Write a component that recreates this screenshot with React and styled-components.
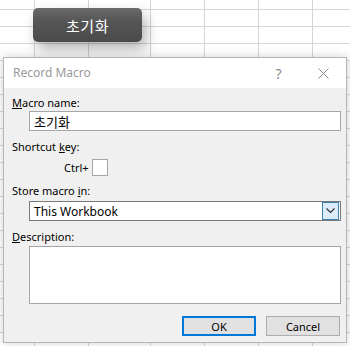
import React from "react";
import styled, { createGlobalStyle } from "styled-components";

const Global = createGlobalStyle`
  html, body { margin: 0; padding: 0; }
  body { font-family: "Noto Sans", "Noto Sans CJK KR", sans-serif; }
`;

const vLines = [34, 88, 150, 204, 258, 312];

const Sheet = styled.div`
  width: 350px;
  height: 346px;
  overflow: hidden;
  background-color: #ffffff;
  background-image:
    ${vLines
      .map(
        (x) =>
          `linear-gradient(to right, transparent ${x}px, #d6d6d6 ${x}px, #d6d6d6 ${x + 1}px, transparent ${x + 1}px)`
      )
      .join(",")},
    repeating-linear-gradient(to bottom, transparent 0, transparent 9px, #d6d6d6 9px, #d6d6d6 10px, transparent 10px, transparent 17px);
  display: flex;
  flex-direction: column;
  align-items: flex-start;
`;

const ShapeButton = styled.div`
  margin: 8px 0 0 33px;
  width: 109px;
  height: 34px;
  border-radius: 5px;
  background: linear-gradient(to bottom, #6a6a6a 0%, #555555 40%, #4a4a4a 100%);
  box-shadow: 4px 7px 14px rgba(0, 0, 0, 0.3);
  color: #ffffff;
  font-family: "Noto Sans CJK KR", sans-serif;
  font-size: 15px;
  display: flex;
  align-items: center;
  justify-content: center;
  letter-spacing: 0.5px;
`;

const Dialog = styled.div`
  margin: 15px 0 0 3px;
  width: 342px;
  height: 284px;
  border: 1px solid #b5b5b5;
  background: #f0f0f0;
  box-shadow: 0 0 10px rgba(0, 0, 0, 0.18);
  display: flex;
  flex-direction: column;
  font-family: "Noto Sans", "Noto Sans CJK KR", sans-serif;
  font-size: 11px;
  color: #000;
`;

const TitleBar = styled.div`
  height: 30px;
  background: #ffffff;
  display: flex;
  align-items: center;
  padding-left: 9px;
`;

const Title = styled.div`
  flex: 1;
  color: #999999;
  font-size: 12px;
  padding-bottom: 1px;
`;

const TitleBtn = styled.div`
  width: 45px;
  height: 30px;
  display: flex;
  align-items: center;
  justify-content: center;
  color: #8a8a8a;
  font-size: 14px;
`;

const Body = styled.div`
  flex: 1;
  display: flex;
  flex-direction: column;
  padding: 7px 5px 0 8px;
`;

const Label = styled.div`
  height: 16px;
  line-height: 16px;
  margin-top: ${(p) => p.$mt || 0}px;
  u { text-decoration: underline; text-underline-offset: 1px; }
`;

const Field = styled.div`
  margin-left: 17px;
  margin-top: ${(p) => p.$mt || 0}px;
  width: 312px;
  height: ${(p) => p.$h || 20}px;
  box-sizing: border-box;
  border: 1px solid #a6a6a6;
  background: #ffffff;
  display: flex;
  align-items: center;
  padding-left: 4px;
  font-size: 12px;
`;

const KoText = styled.span`
  font-family: "Noto Sans CJK KR", sans-serif;
  font-size: 13px;
`;

const ShortcutRow = styled.div`
  display: flex;
  align-items: center;
  margin-top: 4px;
  padding-left: 52px;
  gap: 3px;
`;

const KeyBox = styled.div`
  width: 16px;
  height: 17px;
  box-sizing: border-box;
  border: 1px solid #a6a6a6;
  background: #fff;
`;

const SelectBox = styled(Field)`
  border-color: #7a7a7a;
  padding-right: 1px;
  justify-content: space-between;
`;

const DropBtn = styled.div`
  width: 17px;
  height: 18px;
  box-sizing: border-box;
  border: 1px solid #3c7fb1;
  background: #dcecfc;
  display: flex;
  align-items: center;
  justify-content: center;
`;

const Footer = styled.div`
  display: flex;
  justify-content: flex-end;
  gap: 10px;
  margin-top: 12px;
  padding-right: 1px;
`;

const Button = styled.div`
  width: 74px;
  height: 20px;
  box-sizing: border-box;
  border: ${(p) => (p.$primary ? "2px solid #0078d7" : "1px solid #adadad")};
  background: #e1e1e1;
  display: flex;
  align-items: center;
  justify-content: center;
  font-size: 11px;
`;

export default function App() {
  return (
    <>
      <Global />
      <Sheet>
        <ShapeButton>초기화</ShapeButton>
        <Dialog>
          <TitleBar>
            <Title>Record Macro</Title>
            <TitleBtn>?</TitleBtn>
            <TitleBtn>
              <svg width="11" height="11" viewBox="0 0 11 11">
                <path d="M0.5 0.5 L10.5 10.5 M10.5 0.5 L0.5 10.5" stroke="#8a8a8a" strokeWidth="1" fill="none" />
              </svg>
            </TitleBtn>
          </TitleBar>
          <Body>
            <Label><u>M</u>acro name:</Label>
            <Field><KoText>초기화</KoText></Field>
            <Label $mt={8}>Shortcut <u>k</u>ey:</Label>
            <ShortcutRow>
              <span>Ctrl+</span>
              <KeyBox />
            </ShortcutRow>
            <Label $mt={7}>Store macro <u>i</u>n:</Label>
            <SelectBox $mt={2}>
              <span>This Workbook</span>
              <DropBtn>
                <svg width="9" height="6" viewBox="0 0 9 6">
                  <path d="M0.5 0.5 L4.5 4.5 L8.5 0.5" stroke="#333" strokeWidth="1.2" fill="none" />
                </svg>
              </DropBtn>
            </SelectBox>
            <Label $mt={8}><u>D</u>escription:</Label>
            <Field $mt={1} $h={58} />
            <Footer>
              <Button $primary>OK</Button>
              <Button>Cancel</Button>
            </Footer>
          </Body>
        </Dialog>
      </Sheet>
    </>
  );
}
